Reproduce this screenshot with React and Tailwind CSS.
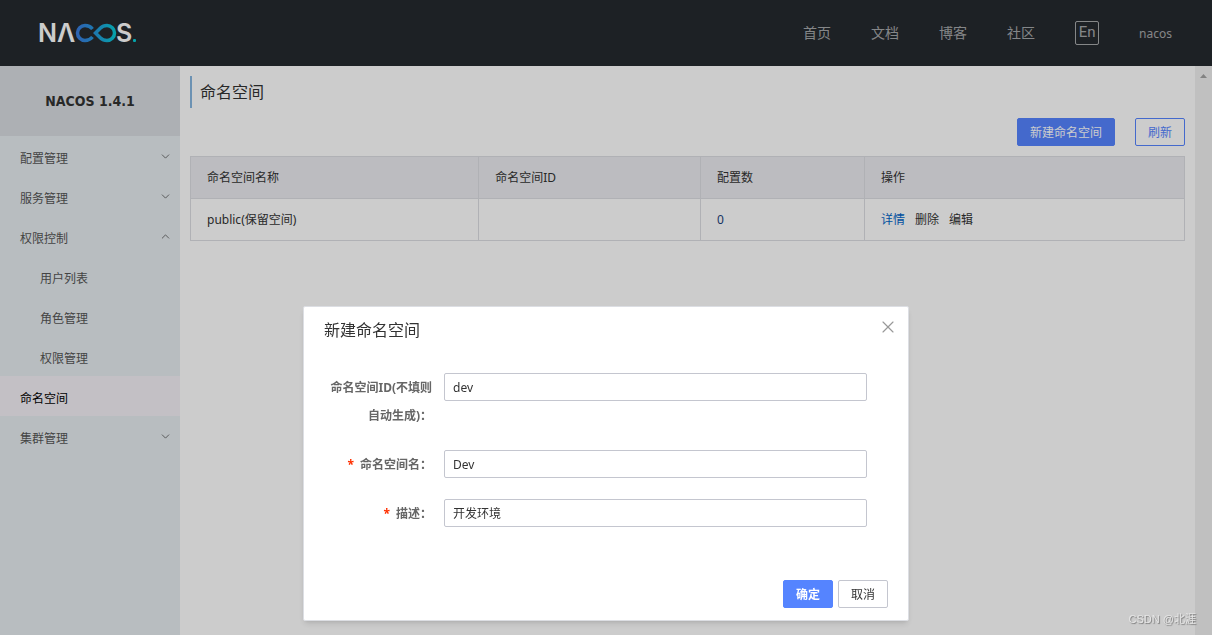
import { useState } from "react";
import { ChevronDown, ChevronUp, X } from "lucide-react";

const navLinks = ["首页", "文档", "博客", "社区"];

const menu = [
  { label: "配置管理", children: [] },
  { label: "服务管理", children: [] },
  { label: "权限控制", open: true, children: ["用户列表", "角色管理", "权限管理"] },
  { label: "命名空间", active: true },
  { label: "集群管理", children: [] },
];

const rows = [{ name: "public(保留空间)", id: "", count: 0 }];

function Logo() {
  return (
    <svg width="104" height="36" viewBox="-4 -6 104 36" role="img" aria-label="NACOS">
      <defs>
        <linearGradient id="loop" x1="36" y1="0" x2="76" y2="0" gradientUnits="userSpaceOnUse">
          <stop offset="0" stopColor="#3a7be0" />
          <stop offset="0.5" stopColor="#2499dc" />
          <stop offset="1" stopColor="#06ccd6" />
        </linearGradient>
      </defs>
      <g fill="#fff" fontFamily="Inter, sans-serif" fontSize="25" fontWeight="600">
        <text x="-2" y="21">N</text>
        <text x="17" y="21">Λ</text>
        <text x="76" y="21">S</text>
      </g>
      <path
        d="M52.500 16C50.500 18.500 48 19.500 45 19.500A7.500 7.500 0 0 1 45 4.500C48 4.500 50.500 5.500 52.500 8M55.500 12L60.500 7C62.500 5 64.500 4.500 67 4.500A7.500 7.500 0 0 1 67 19.500C64.500 19.500 62.500 19 60.500 17Z"
        fill="none"
        stroke="url(#loop)"
        strokeWidth="3.500"
      />
      <rect x="93" y="18" width="3" height="3" rx="1" fill="#06ccd6" />
    </svg>
  );
}

function Header() {
  return (
    <header className="flex h-[66px] shrink-0 items-center justify-between bg-[#252a2f] pl-9 pr-10">
      <a href="#home">
        <Logo />
      </a>
      <nav className="flex items-center gap-10 text-sm text-white/60">
        {navLinks.map((item) => (
          <a key={item} href="#nav">{item}</a>
        ))}
        <button className="flex size-6 justify-center rounded-xs border border-white/60 font-['Roboto'] text-[15px] leading-5">
          En
        </button>
        <a href="#user" className="pt-0.5 text-xs">nacos</a>
      </nav>
    </header>
  );
}

function Sidebar() {
  return (
    <aside className="w-[180px] shrink-0 bg-[#e7edf1] text-[#555]">
      <h1 className="flex h-[70px] items-center justify-center bg-[#d9dde2] font-['DejaVu_Sans_Condensed'] text-sm font-bold text-[#333]">
        NACOS 1.4.1
      </h1>
      <ul>
        {menu.map((item) => (
          <li key={item.label}>
            <a
              href="#menu"
              className={`flex h-10 items-center justify-between pl-5 pr-2 ${item.active ? "bg-[#f4f1f7] text-black" : ""}`}
            >
              <span className="pt-1.5">{item.label}</span>
              {item.children && (item.open
                ? <ChevronUp size={13} strokeWidth={1.5} />
                : <ChevronDown size={13} strokeWidth={1.5} />)}
            </a>
            {item.open && (
              <ul>
                {item.children.map((child) => (
                  <li key={child}>
                    <a href="#menu" className="flex h-10 items-center pl-10">
                      <span className="pt-1.5">{child}</span>
                    </a>
                  </li>
                ))}
              </ul>
            )}
          </li>
        ))}
      </ul>
    </aside>
  );
}

function NamespaceTable() {
  return (
    <table className="w-full table-fixed border-collapse text-left text-[#333]">
      <colgroup>
        <col className="w-[29%]" />
        <col className="w-[22.3%]" />
        <col className="w-[16.5%]" />
        <col />
      </colgroup>
      <thead className="bg-[#ebecf0]">
        <tr className="h-[42px]">
          {["命名空间名称", "命名空间ID", "配置数", "操作"].map((title) => (
            <th key={title} className="border border-[#dcdee3] px-4 font-normal">{title}</th>
          ))}
        </tr>
      </thead>
      <tbody>
        {rows.map((row) => (
          <tr key={row.name} className="h-[42px]">
            <td className="border border-[#dcdee3] px-4">{row.name}</td>
            <td className="border border-[#dcdee3] px-4">{row.id}</td>
            <td className="border border-[#dcdee3] px-4 text-[#1c3f7c]">{row.count}</td>
            <td className="border border-[#dcdee3] px-4">
              <div className="flex gap-2.5">
                <a href="#detail" className="text-[#0064c8]">详情</a>
                <a href="#delete">删除</a>
                <a href="#edit">编辑</a>
              </div>
            </td>
          </tr>
        ))}
      </tbody>
    </table>
  );
}

function Field({ id, label, required, value, onChange }) {
  return (
    <div className="flex items-start">
      <label htmlFor={id} className="w-[140px] shrink-0 pt-px pl-5 pr-3 text-right font-bold leading-7 text-[#666]">
        {required && <span className="mr-1.5 text-[#ff3000]">*</span>}
        {`${label}：`}
      </label>
      <input
        id={id}
        value={value}
        onChange={(e) => onChange(id, e.target.value)}
        className="h-7 min-w-0 flex-1 rounded-xs border border-[#c4c6cf] px-2 text-[#333] outline-none"
      />
    </div>
  );
}

function NamespaceDialog({ onClose }) {
  const [form, setForm] = useState({ id: "dev", name: "Dev", desc: "开发环境" });

  const handleChange = (key, value) => setForm({ ...form, [key]: value });

  return (
    <div className="fixed inset-0 flex items-end justify-center bg-black/20 pb-3.5">
      <div role="dialog" aria-labelledby="dialog-title" className="relative w-1/2 rounded-xs border border-[#dcdee3] bg-white shadow-md">
        <h2 id="dialog-title" className="px-5 pt-[11px] pb-[13px] text-base text-[#333]">新建命名空间</h2>
        <button onClick={onClose} aria-label="关闭" className="absolute top-2.5 right-2.5 text-[#999]">
          <X size={20} strokeWidth={1.4} />
        </button>
        <div className="flex flex-col gap-5 pt-[18px] pr-[41px]">
          <Field id="id" label="命名空间ID(不填则自动生成)" value={form.id} onChange={handleChange} />
          <Field id="name" label="命名空间名" required value={form.name} onChange={handleChange} />
          <Field id="desc" label="描述" required value={form.desc} onChange={handleChange} />
        </div>
        <div className="flex justify-end gap-[5px] px-5 pt-[52px] pb-3">
          <button onClick={onClose} className="h-7 rounded-xs border border-[#5584ff] bg-[#5584ff] px-3 pt-0.5 font-bold text-white">确定</button>
          <button onClick={onClose} className="h-7 rounded-xs border border-[#c4c6cf] bg-white px-3 pt-0.5 text-[#333]">取消</button>
        </div>
      </div>
    </div>
  );
}

export default function App() {
  const [open, setOpen] = useState(true);

  return (
    <div className="flex h-screen flex-col overflow-hidden bg-white font-['Noto_Sans','Noto_Sans_CJK_SC',sans-serif] text-xs">
      <Header />
      <div className="flex flex-1">
        <Sidebar />
        <main className="flex-1 p-2.5">
          <h2 className="flex h-8 items-center border-l-2 border-[#88b7e0] pl-2 text-base text-[#333]">命名空间</h2>
          <div className="flex justify-end gap-5 py-2.5">
            <button onClick={() => setOpen(true)} className="h-7 rounded-xs border border-[#5584ff] bg-[#5584ff] px-3 pt-0.5 text-white">新建命名空间</button>
            <button className="h-7 rounded-xs border border-[#5584ff] px-3 pt-0.5 text-[#5584ff]">刷新</button>
          </div>
          <NamespaceTable />
        </main>
        <div className="flex w-[17px] justify-center bg-[#f1f1f1] pt-2">
          <svg width="7" height="4" viewBox="0 0 7 4" fill="#a3a3a3">
            <path d="M0 4L3.500 0L7 4Z" />
          </svg>
        </div>
      </div>
      {open && <NamespaceDialog onClose={() => setOpen(false)} />}
      <p className="fixed right-4 bottom-2 font-['Liberation_Sans','Noto_Sans_CJK_SC',sans-serif] text-[11px] text-[#e6e6e6] [text-shadow:1px_1px_1px_#777]">
        CSDN @北涯
      </p>
    </div>
  );
}
